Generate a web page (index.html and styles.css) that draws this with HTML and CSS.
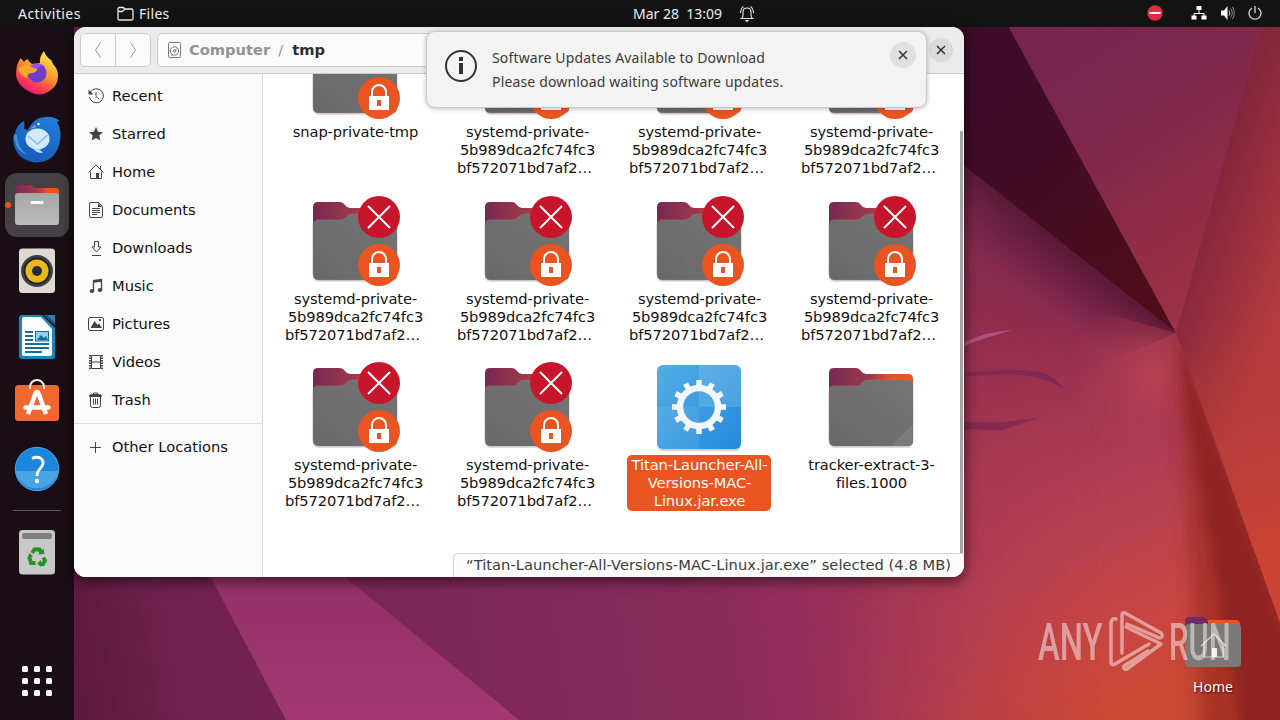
FILE: index.html
```html
<!doctype html>
<html>
<head>
    <meta charset='utf-8'>
    <title>Files</title>
    <link rel="stylesheet" href="styles.css">
</head>
<body>
<!-- shared icons -->
<svg class='defs' width='0' height='0'>
    <defs>
        <linearGradient id='gback' x1='0' y1='0' x2='1' y2='0'>
            <stop offset='0' stop-color='#772953'/><stop offset='.5' stop-color='#a03a4a'/><stop offset='.75' stop-color='#e95420'/><stop offset='1' stop-color='#e95420'/>
        </linearGradient>
        <linearGradient id='gfront' x1='0' y1='1' x2='1' y2='0'>
            <stop offset='0' stop-color='#686868'/><stop offset='1' stop-color='#757575'/>
        </linearGradient>
        <linearGradient id='gexe' x1='0' y1='0' x2='1' y2='1'>
            <stop offset='0' stop-color='#52aee4'/><stop offset='1' stop-color='#2389dc'/>
        </linearGradient>
    </defs>
    <symbol id='folder' viewBox='0 0 96 96'>
        <path fill='#000' opacity='.13' d='M6 22h84v61q0 6-6 6H12q-6 0-6-6z'/>
        <path fill='url(#gback)' d='M6 40V14q0-5 5-5h22q3 0 5 3 2 3 5 3h42q5 0 5 5v20z'/>
        <path fill='url(#gfront)' stroke='#9b7577' stroke-width='.5' d='M6 33q0-6 5-6h22q4 0 6-3 3-3 6-3h39q6 0 6 6v54q0 6-6 6H12q-6 0-6-6z'/>
        <path fill='#7a7a7a' d='M68 87l22-22v16q0 6-6 6z'/>
    </symbol>
    <symbol id='lock' viewBox='0 0 96 96'>
        <circle cx='72' cy='72' r='21' fill='#e95420'/>
        <path fill='none' stroke='#fff' stroke-width='2' d='M65 71v-5a7 7 0 0 1 14 0v5'/>
        <path fill='#fff' fill-rule='evenodd' d='M62 70h20v14H62zM70 74v6h4v-6z'/>
    </symbol>
    <symbol id='denied' viewBox='0 0 96 96'>
        <circle cx='72' cy='24' r='21' fill='#c7162b'/>
        <path stroke='#fff' stroke-width='2' d='M61 13l22 22M83 13L61 35'/>
    </symbol>
    <symbol id='exe' viewBox='0 0 96 96'>
        <rect x='6' y='7' width='84' height='85' rx='6' fill='#000' opacity='.18'/>
        <rect x='6' y='6' width='84' height='84' rx='6' fill='url(#gexe)'/>
        <path fill='#fff' opacity='.13' d='M48 6h36q6 0 6 6v36H48z'/>
        <path fill='#fff' opacity='.08' d='M6 48h42v42H12q-6 0-6-6z'/>
        <g stroke='#f4f6f8' fill='none'>
            <circle cx='48' cy='48' r='19' stroke-width='6.5'/>
            <path stroke-width='5.5' d='M48 21v7M48 68v7M21 48h7M68 48h7M34.5 24.6l3.5 6M58 65.4l3.5 6M24.6 34.5l6 3.5M65.4 58l6 3.5M24.6 61.5l6-3.5M65.4 38l6-3.5M34.5 71.4l3.5-6M58 30.6l3.5-6'/>
        </g>
    </symbol>
    <symbol id='close' viewBox='0 0 24 24'>
        <path stroke='#333' stroke-width='1.5' d='M8 8l8 8M16 8l-8 8'/>
    </symbol>
</svg>

<!-- wallpaper -->
<svg class='wallpaper' viewBox='0 0 1280 720'>
    <defs>
        <linearGradient id='w1' gradientUnits='userSpaceOnUse' x1='74' y1='600' x2='1180' y2='600' gradientTransform='rotate(-9 600 600)'>
            <stop offset='0' stop-color='#5c1a3d'/><stop offset='.08' stop-color='#6d204b'/><stop offset='.25' stop-color='#7b2656'/><stop offset='.52' stop-color='#862a5a'/><stop offset='.7' stop-color='#98305a'/><stop offset='1' stop-color='#c04248'/>
        </linearGradient>
        <linearGradient id='w2' gradientUnits='userSpaceOnUse' x1='940' y1='260' x2='1130' y2='710'>
            <stop offset='0' stop-color='#66204a'/><stop offset='.2' stop-color='#86294e'/><stop offset='.42' stop-color='#a43754'/><stop offset='.65' stop-color='#b94150'/><stop offset='.85' stop-color='#c84640'/><stop offset='1' stop-color='#c84833'/>
        </linearGradient>
        <linearGradient id='w2x' gradientUnits='userSpaceOnUse' x1='800' y1='0' x2='1100' y2='0'>
            <stop offset='0' stop-color='#fff' stop-opacity='0'/><stop offset='1' stop-color='#fff'/>
        </linearGradient>
        <mask id='m2'><rect width='1280' height='720' fill='url(#w2x)'/></mask>
        <linearGradient id='w3' gradientUnits='userSpaceOnUse' x1='970' y1='90' x2='1170' y2='330'>
            <stop offset='0' stop-color='#3c0c28'/><stop offset='1' stop-color='#500d1a'/>
        </linearGradient>
        <linearGradient id='w4' gradientUnits='userSpaceOnUse' x1='1040' y1='40' x2='1210' y2='300'>
            <stop offset='0' stop-color='#75254f'/><stop offset='.45' stop-color='#83284a'/><stop offset='1' stop-color='#9c3146'/>
        </linearGradient>
        <linearGradient id='w5' gradientUnits='userSpaceOnUse' x1='1205' y1='215' x2='1300' y2='250'>
            <stop offset='0' stop-color='#84263b'/><stop offset='1' stop-color='#b53b40'/>
        </linearGradient>
        <linearGradient id='w6' gradientUnits='userSpaceOnUse' x1='1200' y1='330' x2='1270' y2='540'>
            <stop offset='0' stop-color='#b03a38' stop-opacity='0'/><stop offset='1' stop-color='#c84434'/>
        </linearGradient>
        <linearGradient id='w8' gradientUnits='userSpaceOnUse' x1='0' y1='570' x2='0' y2='720'>
            <stop offset='0' stop-color='#912f65'/><stop offset='1' stop-color='#a23972'/>
        </linearGradient>
        <linearGradient id='w9' gradientUnits='userSpaceOnUse' x1='1080' y1='257' x2='1042' y2='305'>
            <stop offset='0' stop-color='#4e1430' stop-opacity='.75'/><stop offset='1' stop-color='#5a1840' stop-opacity='0'/>
        </linearGradient>
        <radialGradient id='w10' gradientUnits='userSpaceOnUse' cx='1155' cy='375' r='85'>
            <stop offset='0' stop-color='#b94250' stop-opacity='.9'/><stop offset='1' stop-color='#b03d52' stop-opacity='0'/>
        </radialGradient>
        <filter id='soft' x='-50%' y='-20%' width='200%' height='140%'><feGaussianBlur stdDeviation='9'/></filter>
        <filter id='softer' x='-50%' y='-20%' width='200%' height='140%'><feGaussianBlur stdDeviation='4'/></filter>
        <clipPath id='fold'><path d='M1176 333l104 290v97H1000V333z'/></clipPath>
    </defs>
    <rect width='1280' height='720' fill='url(#w1)'/>
    <g mask='url(#m2)'><rect x='700' width='580' height='720' fill='url(#w2)'/></g>
    <path fill='url(#w9)' d='M900 115L1176 333 900 450z'/>
    <path fill='url(#w10)' d='M1176 333L1060 300v200h200z'/>
    <path fill='url(#w8)' d='M200 557h121l24 20 174 143H286z'/>
    <path fill='url(#w3)' d='M900 20h105l171 313L900 115z'/>
    <path fill='url(#w4)' d='M1005 20h259l-88 313z'/>
    <path fill='url(#w5)' d='M1264 20h16v603L1176 333z'/>
    <path fill='url(#w6)' d='M1280 200v430L1176 333z'/>
    <g clip-path='url(#fold)'>
        <path fill='#92281f' opacity='.6' filter='url(#soft)' d='M1176 340l140 340v90H1205z'/>
        <path fill='#8c2220' opacity='.85' filter='url(#softer)' d='M1176 333l140 380v60H1250z'/>
    </g>
    <path fill='#b0507f' d='M964 342q25-11 49-12-26 7-49 16z'/>
    <path fill='#822a55' d='M964 373q55-6 80 0 12 5 20 16-18-10-33-13-30-4-67 1z'/>
    <path fill='#822a50' d='M964 422h40l34-4-36 12-38-1z'/>
</svg>

<div class='topbar'>
    <span class='activities'>Activities</span>
    <span class='app'>
        <svg width='17' height='16' viewBox='0 0 17 16' fill='none' stroke='#eee' stroke-width='1.3'><path d='M1 4.500V3q0-1.500 1.500-1.500h3.500q1 0 1.500 1.500h7q1.500 0 1.500 1.500v8q0 1.500-1.500 1.500h-12Q1 14 1 12.500V4.500q0 1 1.500 1H5q1.500 0 2.500-2.500'/></svg>
        <span class='appname'>Files</span>
    </span>
    <span class='clock'>Mar 28&nbsp; 13:09</span>
    <svg class='bell' width='14' height='16' viewBox='0 0 14 16' fill='none' stroke='#eee' stroke-width='1.1'><path d='M1.500 12.500Q3 11.500 3 9V6q0-4 4-4t4 4v3q0 2.500 1.500 3.500zM3.500.500Q.500 2.500.500 7M10.500.500q3 2 3 6.500'/><path fill='#fff' stroke='none' d='M5 14h4q-1 2-2 2t-2-2z'/></svg>
    <div class='tray'>
        <svg class='dnd' width='16' height='16' viewBox='0 0 16 16'><circle cx='8' cy='8' r='7.700' fill='#e22a42'/><path fill='#fff' d='M2.500 7h11v2h-11z'/></svg>
        <svg class='net' width='16' height='14' viewBox='0 0 16 14'><path fill='none' stroke='#fff' d='M8 3v4M3 10V7.500h10V10'/><path fill='#fff' d='M5.500 0h5v4h-5zM.5 9.500h5v4h-5zM10.500 9.500h5v4h-5z'/></svg>
        <svg class='vol' width='16' height='14' viewBox='0 0 16 14'><path fill='#fff' d='M1 4.500h3L7.500 0v14L4 9.500H1z'/><path fill='none' stroke='#ccc' d='M9 4.500q1.500 2.500 0 5'/><path fill='none' stroke='#888' d='M10.500 2.500q3.500 4.500 0 9M12.500 1q3.500 6 0 12'/></svg>
        <svg class='power' width='14' height='14' viewBox='0 0 14 14' fill='none' stroke='#ddd' stroke-width='1.300'><path d='M4 2a6 6 0 1 0 6 0M7 0v7'/></svg>
    </div>
</div>

<div class='screen'>
    <div class='dock'>
        <div class='dockitem'>
            <svg width='48' height='48' viewBox='0 0 48 48'>
                <defs>
                    <linearGradient id='ff' x1='.8' y1='.1' x2='.3' y2='1'><stop offset='0' stop-color='#ffe14a'/><stop offset='.4' stop-color='#ff9a2c'/><stop offset='.75' stop-color='#fb3d52'/><stop offset='1' stop-color='#e3157c'/></linearGradient>
                </defs>
                <path fill='url(#ff)' d='M6 12q1-1 1-3 2 1 4 4 1-2 4-3 0 2 4 5l8-1q-1-6 4-12 2 6 7 9 1 1 2 4 5 5 5 12 0 10-9 15.500t-18 1Q4 37 3 26 3 17 6 12z'/>
                <circle cx='24' cy='24' r='9.500' fill='#6b3fc9'/>
                <path fill='#9a50e8' d='M18 17q6-5 14 0-5-1-7 3l-7 1z'/>
                <path fill='#ffa52e' d='M5 20q5-6 12-3 4 3 7 3 0 3-5 4-5 0-5 5-6-1-9-9z'/>
            </svg>
        </div>
        <div class='dockitem'>
            <svg width='50' height='50' viewBox='0 0 50 50'>
                <defs><linearGradient id='tb' x1='.8' y1='0' x2='.3' y2='1'><stop offset='0' stop-color='#1f7fd6'/><stop offset='1' stop-color='#1858b8'/></linearGradient></defs>
                <path fill='url(#tb)' d='M12 7q1 3 0 8l4 1Q22 3 34 3q7-1 14 4l-3 1q4 7 3.500 15Q46 48 24 48.500 6 47 2 31q-2-9 1-11 1-9 9-13z'/>
                <path fill='#3b93e0' d='M2 20l3 1q0 12 10 20Q2 36 2 20z'/>
                <ellipse cx='25.500' cy='25' rx='12' ry='10.500' fill='#d3eafc'/>
                <path fill='none' stroke='#8db9df' stroke-width='1.500' d='M16 22l9.500 8 10-9'/>
                <path fill='#b7dcf8' d='M21 34q8 1 10 5-8 0-10-5z'/>
                <circle cx='26.500' cy='10' r='1.200' fill='#fff'/>
                <path fill='#b59ac2' d='M18 15l5-4 1 2z'/>
            </svg>
        </div>
        <div class='dockitem active'>
            <span class='dot'></span>
            <svg width='48' height='48' viewBox='0 0 48 48'>
                <defs><linearGradient id='fm' x1='0' y1='0' x2='0' y2='1'><stop offset='0' stop-color='#a5a5a5'/><stop offset='1' stop-color='#bcbcbc'/></linearGradient></defs>
                <path fill='url(#gback)' d='M2 18V7q0-3 3-3h13q2 0 3 2l1 1h21q3 0 3 3v8z'/>
                <rect x='2' y='12' width='44' height='32' rx='3' fill='url(#fm)'/>
                <rect x='17.500' y='20' width='13' height='3' rx='1' fill='#fff'/>
            </svg>
        </div>
        <div class='dockitem'>
            <svg width='48' height='48' viewBox='0 0 48 48'>
                <rect x='6' y='1.500' width='36' height='44.500' rx='3.500' fill='#dedad1'/>
                <circle cx='24' cy='24' r='16' fill='#3d4448'/>
                <circle cx='24' cy='24' r='13.500' fill='#222'/>
                <circle cx='24' cy='24' r='11.500' fill='#e9b81c'/>
                <circle cx='24' cy='24' r='5' fill='#252a33'/>
            </svg>
        </div>
        <div class='dockitem'>
            <svg width='48' height='48' viewBox='0 0 48 48'>
                <path fill='#1b85b5' d='M9 2h20l13 13v28q0 3-3 3H9q-3 0-3-3V5q0-3 3-3z'/>
                <path fill='#1a5276' d='M30 2h12v11z'/><path fill='#3181ad' d='M34 2h8v8z'/>
                <path fill='#fff' d='M11 4h17l11 12v25q0 2-2 2H11q-2 0-2-2V6q0-2 2-2z'/>
                <path stroke='#176a9c' stroke-width='2' d='M12 19h8M12 23h8M12 27h8M12 31h24M12 35h24M12 39h17'/>
                <rect x='22.500' y='18.500' width='13' height='9.500' fill='#8ed0ef' stroke='#176a9c'/>
                <path fill='#176a9c' d='M24 27l4-5 3 3 2-2 2 4z'/>
            </svg>
        </div>
        <div class='dockitem'>
            <svg width='48' height='48' viewBox='0 0 48 48'>
                <rect x='2' y='6' width='44' height='36' rx='3.500' fill='#f0682f'/>
                <path fill='none' stroke='#f9eee8' stroke-width='2' d='M17 10V8a7 7 0 0 1 14 0v2'/>
                <path fill='none' stroke='#fff' stroke-width='4.500' stroke-linejoin='bevel' d='M15 35l8-22h2l8 22'/>
                <path stroke='#fff' stroke-width='4.500' stroke-linecap='round' d='M12.500 28.500h23'/>
            </svg>
        </div>
        <div class='dockitem'>
            <svg width='48' height='48' viewBox='0 0 48 48'>
                <circle cx='24' cy='24' r='22' fill='#1c86dd'/>
                <path fill='#4aa4e4' d='M2.500 26h43a22 22 0 0 1-43 0z'/>
                <circle cx='24' cy='24' r='21.700' fill='none' stroke='#5fb1ea' stroke-width='.7'/>
                <path fill='none' stroke='#fff' stroke-width='2.800' d='M19 13.500q5-2.500 9 0 3.500 3 1 7.500l-3 4q-2 2-2 6'/>
                <circle cx='24' cy='36' r='2.200' fill='#fff'/>
            </svg>
        </div>
        <div class='docksep'></div>
        <div class='dockitem'>
            <svg width='48' height='48' viewBox='0 0 48 48'>
                <rect x='6' y='2' width='36' height='44.500' rx='3.500' fill='#c8c8c8'/>
                <rect x='9' y='5' width='30' height='6' rx='2' fill='#808080'/>
                <g fill='none' stroke='#27912a' stroke-width='3.800'>
                    <path d='M19 25l2.500-3.500h5l2 3.500M16.500 29.500l1.500 5.500h4.500M27.500 36H30l2-3.500-1.500-3'/>
                </g>
                <path fill='#27912a' d='M25 26.500l6.500-.5-1-5.500zM14 31l6-2.500-3.500-3.500zM28 32v7l-4-3.500z'/>
            </svg>
        </div>
        <div class='dockitem apps'>
            <span></span><span></span><span></span>
            <span></span><span></span><span></span>
            <span></span><span></span><span></span>
        </div>
    </div>

    <div class='desktop'>
        <div class='window'>
            <div class='header'>
                <div class='navbtns'>
                    <div class='navbtn'><svg width='10' height='18' viewBox='0 0 10 18' fill='none' stroke='#999'><path d='M7.500 1.500l-5 7.500 5 7.500'/></svg></div>
                    <div class='navbtn'><svg width='10' height='18' viewBox='0 0 10 18' fill='none' stroke='#999'><path d='M2.500 1.500l5 7.500-5 7.500'/></svg></div>
                </div>
                <div class='path'>
                    <svg width='14' height='16' viewBox='0 0 14 16' fill='none' stroke='#777'><rect x='.5' y='.5' width='12' height='15' rx='1'/><circle cx='6.500' cy='9' r='4.200'/><circle cx='6.500' cy='9' r='1.200'/><path d='M7 8.500l2-2M3 13.500l2-1'/></svg>
                    <span class='crumb'>Computer</span>
                    <span class='slash'>/</span>
                    <span class='crumb current'>tmp</span>
                </div>
                <div class='closebtn'><svg width='24' height='24'><use href='#close'/></svg></div>
            </div>
            <div class='body'>
                <div class='sidebar'>
                    <div class='place'><svg viewBox='0 0 16 16'><path d='M2.500 4A7 7 0 1 1 1.500 9M8 4v4.500l3 2.500'/><path class='fill' d='M.5 1.500v5h5z'/></svg>Recent</div>
                    <div class='place'><svg viewBox='0 0 16 16'><path class='fill' d='M8 1l2 4.700 5 .5-3.700 3.300 1 5L8 12l-4.300 2.500 1-5L1 6.200l5-.5z'/></svg>Starred</div>
                    <div class='place'><svg viewBox='0 0 16 16'><path d='M.5 8.500L8 1l7.500 7.500M2.500 7.500v7h11v-7M12.500 5V2'/><path class='fill' d='M8 9h3v6H8z'/></svg>Home</div>
                    <div class='place'><svg viewBox='0 0 16 16'><path d='M3 .500h7.500l4 4V14q0 1.500-1.500 1.500H3Q1.500 15.500 1.500 14V2Q1.500.500 3 .500zM4 6.500h8M4 8.500h8M4 10.500h8M4 12.500h5'/><path class='fill' d='M10 1v4h4z'/></svg>Documents</div>
                    <div class='place'><svg viewBox='0 0 16 16'><path d='M6.500 1.500h4V7h2.500L8.500 12 4 7h2.500zM4 15.500h9'/></svg>Downloads</div>
                    <div class='place'><svg viewBox='0 0 16 16'><path stroke-width='1.300' d='M5.500 13V2.500l8-1V12M5.500 4l8-1'/><ellipse class='fill' cx='4' cy='13' rx='2.300' ry='2'/><ellipse class='fill' cx='12' cy='12' rx='2.300' ry='2'/></svg>Music</div>
                    <div class='place'><svg viewBox='0 0 16 16'><rect x='.5' y='1.500' width='15' height='13' rx='1.500'/><path class='fill' d='M2.500 12l4-7 3 4 1.500-1.500 3 4.500zM11 3h2v2h-2z'/></svg>Pictures</div>
                    <div class='place'><svg viewBox='0 0 16 16'><path d='M3.500 1.500h9v13h-9zM3.500 8h9'/><path stroke-width='2' stroke-dasharray='1.500 1' d='M2 1v14M14 1v14'/></svg>Videos</div>
                    <div class='place'><svg viewBox='0 0 16 16'><path d='M2.500 5v8.500q0 2 2 2h6q2 0 2-2V5M5.500 6.500v6M7.500 6.500v6M9.500 6.500v6M5.500 2.500v-1.500h4v1.500'/><path class='fill' d='M1 5q0-3 3-3h7q3 0 3 3z'/></svg>Trash</div>
                    <div class='sep'></div>
                    <div class='place'><svg viewBox='0 0 16 16'><path d='M2 8.500h11M7.500 3v11'/></svg>Other Locations</div>
                </div>
                <div class='files'>
                    <div class='grid'>
                        <div class='file'><svg><use href='#folder'/><use href='#lock'/></svg><p>snap-private-tmp</p></div>
                        <div class='file'><svg><use href='#folder'/><use href='#lock'/></svg><p>systemd-private-<br>5b989dca2fc74fc3<br><span class='cut'>bf572071bd7af2…</span></p></div>
                        <div class='file'><svg><use href='#folder'/><use href='#lock'/></svg><p>systemd-private-<br>5b989dca2fc74fc3<br><span class='cut'>bf572071bd7af2…</span></p></div>
                        <div class='file'><svg><use href='#folder'/><use href='#lock'/></svg><p>systemd-private-<br>5b989dca2fc74fc3<br><span class='cut'>bf572071bd7af2…</span></p></div>

                        <div class='file'><svg><use href='#folder'/><use href='#denied'/><use href='#lock'/></svg><p>systemd-private-<br>5b989dca2fc74fc3<br><span class='cut'>bf572071bd7af2…</span></p></div>
                        <div class='file'><svg><use href='#folder'/><use href='#denied'/><use href='#lock'/></svg><p>systemd-private-<br>5b989dca2fc74fc3<br><span class='cut'>bf572071bd7af2…</span></p></div>
                        <div class='file'><svg><use href='#folder'/><use href='#denied'/><use href='#lock'/></svg><p>systemd-private-<br>5b989dca2fc74fc3<br><span class='cut'>bf572071bd7af2…</span></p></div>
                        <div class='file'><svg><use href='#folder'/><use href='#denied'/><use href='#lock'/></svg><p>systemd-private-<br>5b989dca2fc74fc3<br><span class='cut'>bf572071bd7af2…</span></p></div>

                        <div class='file'><svg><use href='#folder'/><use href='#denied'/><use href='#lock'/></svg><p>systemd-private-<br>5b989dca2fc74fc3<br><span class='cut'>bf572071bd7af2…</span></p></div>
                        <div class='file'><svg><use href='#folder'/><use href='#denied'/><use href='#lock'/></svg><p>systemd-private-<br>5b989dca2fc74fc3<br><span class='cut'>bf572071bd7af2…</span></p></div>
                        <div class='file selected'><svg><use href='#exe'/></svg><p>Titan-Launcher-All-<br>Versions-MAC-<br>Linux.jar.exe</p></div>
                        <div class='file'><svg><use href='#folder'/></svg><p>tracker-extract-3-<br>files.1000</p></div>
                    </div>
                    <div class='scrollbar'></div>
                    <div class='status'>“Titan-Launcher-All-Versions-MAC-Linux.jar.exe” selected (4.8 MB)</div>
                </div>
            </div>
        </div>

        <div class='deskicon'>
            <svg width='58' height='54' viewBox='0 0 58 54'>
                <path fill='#e95420' d='M20 5h32q4 0 4 4v8H20z'/>
                <path fill='#6e2a6a' d='M1 16V6q0-4 4-4h13q3 0 4 2l2 2v10z'/>
                <rect x='1' y='9' width='56' height='43' rx='4' fill='#7c7876'/>
                <path fill='none' stroke='#d8d2d0' stroke-width='1.200' d='M17 31l13-12 12 12M20 29v13h19V29'/>
                <path fill='#eee' d='M28 33h5v9h-5z'/>
            </svg>
            <span>Home</span>
        </div>
    </div>
</div>

<svg class='watermark' width='200' height='64' viewBox='0 0 200 64'>
    <text transform='translate(0 50) scale(.63 1)'>ANY</text>
    <text transform='translate(131 50) scale(.595 1)'>RUN</text>
    <g fill='none' stroke='#fff' stroke-width='3.500' stroke-linejoin='round' stroke-linecap='round'>
        <path d='M84 43V5q0-3 3-2l36 20q3 4-1 5-2 0-5-2L89 14'/>
        <path d='M78 9q-5-1-5 4v39q0 4 4 2l34-20'/>
        <path d='M88 17l35 17-34 25q-4 1-3-3l24-15'/>
    </g>
</svg>

<div class='notice'>
    <svg class='info' width='34' height='34' viewBox='0 0 34 34'><circle cx='16' cy='17' r='15' fill='none' stroke='#333' stroke-width='2'/><path fill='#333' d='M14 8h4v4h-4zM14 14h4v11h-4z'/></svg>
    <div class='msg'>
        <div class='title'>Software Updates Available to Download</div>
        <div class='text'>Please download waiting software updates.</div>
    </div>
    <div class='dismiss'><svg width='24' height='24'><use href='#close'/></svg></div>
</div>
</body>
</html>
```
FILE: styles.css
```css
*{margin:0;padding:0;box-sizing:border-box;}
body{width:1280px;height:720px;overflow:hidden;position:relative;background:#7b2656;font-family:"DejaVu Sans",sans-serif;font-size:14.67px;color:#111;}
svg{display:block;flex:none;}
.defs{position:absolute;}
.wallpaper{position:absolute;top:0;left:0;width:1280px;height:720px;}

.topbar{position:relative;display:flex;align-items:center;height:27px;background:#131313;color:#eee;font-family:"Noto Sans",sans-serif;font-size:14px;}
.activities{width:99px;padding-left:18px;letter-spacing:.45px;}
.app{display:flex;align-items:center;width:534px;padding-left:18px;}
.appname{margin-left:5px;letter-spacing:.3px;}
.bell{margin-left:18px;}
.tray{display:flex;align-items:center;margin-left:auto;padding:0 18px 2px 0;}
.net{margin-left:28px;}
.vol{margin-left:13px;}
.power{margin-left:12px;}

.screen{position:relative;display:flex;height:693px;}
.dock{display:flex;flex-direction:column;align-items:center;gap:2px;width:74px;padding:14px 0 7px;background:rgba(23,14,20,.96);}
.dockitem{position:relative;display:flex;align-items:center;justify-content:center;width:64px;height:64px;border-radius:12px;}
.active{background:#454044;}
.dot{position:absolute;left:0;top:29px;width:6px;height:6px;border-radius:3px;background:#e95420;}
.docksep{width:48px;height:1px;margin:7px 0;background:#5e595d;}
.apps{display:grid;grid-template-columns:repeat(3,6px);gap:6px;align-content:center;margin-top:auto;}
.apps span{width:6px;height:6px;border-radius:1.5px;background:#fff;}

.desktop{position:relative;flex:1;}
.window{display:flex;flex-direction:column;width:890px;height:550px;border-radius:12px;overflow:hidden;background:#fff;box-shadow:0 3px 12px 2px rgba(0,0,0,.5);}
.header{display:flex;align-items:center;height:47px;padding:0 11px 0 6px;background:#ebebeb;border-bottom:1px solid #c9c9c9;}
.navbtns{display:flex;width:71px;height:34px;border:1px solid #ccc;border-radius:5px;background:#fafafa;}
.navbtn{display:flex;flex:1;align-items:center;justify-content:center;}
.navbtn+.navbtn{border-left:1px solid #ccc;}
.path{display:flex;align-items:center;width:560px;height:34px;margin-left:6px;padding-left:10px;border:1px solid #ccc;border-radius:5px;background:#fafafa;font-weight:bold;color:#929292;}
.crumb{margin-left:7px;padding-bottom:2px;}
.slash{margin:0 2px 0 8px;padding-bottom:2px;font-weight:normal;}
.current{color:#2e2e2e;}
.closebtn{margin-left:auto;border-radius:12px;background:#dadada;}

.body{display:flex;flex:1;min-height:0;}
.sidebar{width:189px;padding-top:2px;background:#fafafa;border-right:1px solid #d5d5d5;}
.place{display:flex;align-items:center;height:38px;padding-left:14px;}
.place svg{width:16px;height:16px;margin:1px 8px 0 0;fill:none;stroke:#444;stroke-width:1;}
.place .fill{fill:#444;stroke:none;}
.sep{height:1px;margin:5px 0 3px;background:#dcdcdc;}

.files{position:relative;flex:1;overflow:hidden;}
.grid{display:grid;grid-template-columns:repeat(4,172px);grid-template-rows:167px 166px 166px;margin:-48px 0 0 6px;}
.file{display:flex;flex-direction:column;align-items:center;}
.file svg{width:96px;height:96px;}
.file p{width:144px;padding:1px 0 1px 1px;line-height:18px;text-align:center;white-space:nowrap;border-radius:5px;letter-spacing:-.09px;}
.cut{margin-right:6px;}
.selected p{background:#e95420;color:#fff;}
.scrollbar{position:absolute;right:1px;top:57px;width:3px;height:422px;background:#a5a5a5;}
.status{position:absolute;right:0;bottom:0;width:511px;height:24px;padding-left:12px;line-height:22px;border:1px solid #d5d5d5;border-width:1px 0 0 1px;border-radius:5px 0 0 0;background:#fafafa;color:#3d3d3d;white-space:nowrap;letter-spacing:.04px;}

.deskicon{position:absolute;left:1110px;top:588px;display:flex;flex-direction:column;align-items:center;color:#fff;font-family:"Noto Sans",sans-serif;font-size:14px;text-shadow:1px 1px 2px #400;}
.deskicon span{margin-top:8px;line-height:20px;}

.watermark{position:absolute;left:1038px;top:610px;opacity:.48;}
.watermark text{font-family:Roboto,sans-serif;font-weight:500;font-size:52px;fill:#fff;}

.notice{position:absolute;left:426px;top:31px;display:flex;width:501px;height:77px;padding:14px 10px 0 18px;border:1px solid #c8c8c8;border-radius:9px;background:#f3f3f3;box-shadow:0 1px 5px rgba(0,0,0,.25);color:#3a3a3a;font-family:"Noto Sans",sans-serif;font-size:14px;}
.info{margin-top:3px;}
.msg{margin-left:13px;line-height:24px;white-space:nowrap;letter-spacing:.16px;}
.dismiss{width:26px;height:26px;margin:-4px 0 0 auto;padding:1px;border-radius:13px;background:#e0e0e0;}
```
